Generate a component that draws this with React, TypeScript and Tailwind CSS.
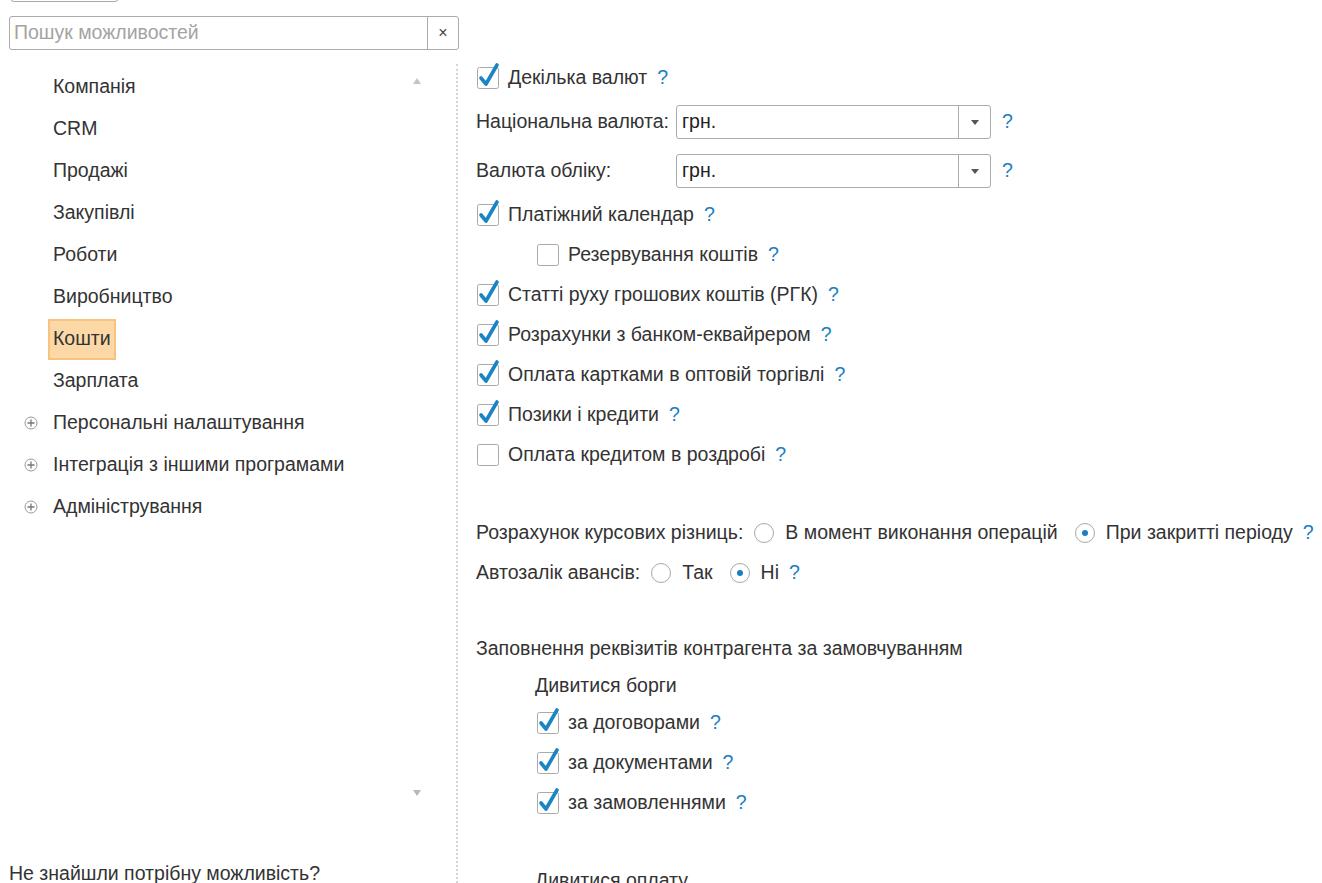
import React from "react";

const Q = () => (
  <span className="ml-[10px] text-[#1b7ec2]">?</span>
);

const Check = ({ on }: { on: boolean }) => (
  <svg width="24" height="24" viewBox="0 0 24 24" className="shrink-0 overflow-visible">
    <rect x="1.5" y="1.5" width="21" height="21" rx="2" fill="#fff" stroke="#a9a9a9" strokeWidth="1" />
    {on && (
      <path d="M5 12 L10 18 L21 -1" fill="none" stroke="#1b84c4" strokeWidth="3.6" strokeLinecap="round" strokeLinejoin="round" />
    )}
  </svg>
);

const Radio = ({ on }: { on: boolean }) => (
  <svg width="22" height="22" viewBox="0 0 22 22" className="shrink-0">
    <circle cx="11" cy="11" r="9.5" fill="#fff" stroke="#a9a9a9" strokeWidth="1" />
    {on && <circle cx="11" cy="11" r="3" fill="#1b7ec2" />}
  </svg>
);

const Plus = () => (
  <svg width="14" height="14" viewBox="0 0 14 14" className="absolute left-[24px] top-1/2 -translate-y-1/2">
    <circle cx="7" cy="7" r="6" fill="#fff" stroke="#9a9a9a" strokeWidth="1" />
    <path d="M7 3.5 V10.5 M3.5 7 H10.5" stroke="#777" strokeWidth="1.3" />
  </svg>
);

const CheckRow = ({ on, label, indent = 0, h = 40 }: { on: boolean; label: string; indent?: number; h?: number }) => (
  <div className="flex items-center shrink-0" style={{ height: h, paddingLeft: indent }}>
    <Check on={on} />
    <span className="ml-[8px]">{label}</span>
    <Q />
  </div>
);

const Select = ({ label }: { label: string }) => (
  <div className="flex items-center h-[34px]">
    <span className="w-[200px] shrink-0 whitespace-nowrap">{label}</span>
    <div className="w-[315px] h-[34px] border border-[#ababab] rounded-[3px] flex items-stretch bg-white">
      <div className="flex-1 flex items-center pl-[5px] text-[#222]">грн.</div>
      <div className="w-[32px] border-l border-[#ababab] flex items-center justify-center">
        <svg width="8" height="5" viewBox="0 0 8 5"><path d="M0 0 H8 L4 5 Z" fill="#555" /></svg>
      </div>
    </div>
    <span className="ml-[11px] text-[#1b7ec2]">?</span>
  </div>
);

const treeItems = ["Компанія", "CRM", "Продажі", "Закупівлі", "Роботи", "Виробництво", "Кошти", "Зарплата"];
const groupItems = ["Персональні налаштування", "Інтеграція з іншими програмами", "Адміністрування"];

export default function App() {
  return (
    <div
      className="w-[1322px] h-[883px] overflow-hidden bg-white text-[#333] text-[19.5px] relative flex flex-col"
      style={{ fontFamily: '"Liberation Sans", Arial, sans-serif' }}
    >
      {/* top cut button */}
      <div className="h-[16px] shrink-0 flex items-start pl-[10px]">
        <div className="w-[109px] h-[20px] -mt-[18px] border border-[#a9a9a9] rounded-[4px] bg-white" />
      </div>
      {/* search */}
      <div className="ml-[9px] w-[450px] h-[34px] shrink-0 border border-[#ababab] rounded-[3px] flex items-stretch">
        <div className="flex-1 flex items-center pl-[4px] text-[#a3a3a3]">Пошук можливостей</div>
        <div className="w-[31px] border-l border-[#ababab] flex items-center justify-center text-[#444] text-[16px]">×</div>
      </div>
      <div className="flex flex-1 min-h-0">
        {/* left */}
        <div className="w-[456px] shrink-0 flex flex-col relative">
          <div className="mt-[16px] flex flex-col shrink-0">
            {treeItems.map((t) => (
              <div key={t} className="h-[42px] shrink-0 flex items-center pl-[48px]">
                {t === "Кошти" ? (
                  <span className="h-[41px] flex items-center px-[3px] bg-[#fbd8a6] border-[2px] border-[#f6c47e]">{t}</span>
                ) : (
                  <span className="pl-[5px]">{t}</span>
                )}
              </div>
            ))}
            {groupItems.map((t) => (
              <div key={t} className="h-[42px] shrink-0 flex items-center pl-[53px] relative">
                <Plus />
                <span>{t}</span>
              </div>
            ))}
          </div>
          <div className="flex-1" />
          <div className="pl-[9px] h-[22px] leading-[22px] mb-[-1px] shrink-0">Не знайшли потрібну можливість?</div>
          {/* scroll arrows */}
          <svg width="8" height="6" viewBox="0 0 8 6" className="absolute left-[413px] top-[28px]"><path d="M4 0 L8 6 H0 Z" fill="#c4c4c4" /></svg>
          <svg width="8" height="6" viewBox="0 0 8 6" className="absolute left-[413px] top-[740px]"><path d="M0 0 H8 L4 6 Z" fill="#b8b8b8" /></svg>
        </div>
        {/* separator */}
        <div className="w-0 mt-[14px] border-l-2 border-dotted border-[#d6d6d6]" />
        {/* right */}
        <div className="flex flex-col pl-[18px]">
          <div className="mt-[8px] shrink-0" />
          <CheckRow on label="Декілька валют" indent={0} />
          <div className="mt-[7px] shrink-0"><Select label="Національна валюта:" /></div>
          <div className="mt-[15px] shrink-0"><Select label="Валюта обліку:" /></div>
          <div className="mt-[7px] shrink-0" />
          <CheckRow on label="Платіжний календар" />
          <CheckRow on={false} label="Резервування коштів" indent={60} />
          <CheckRow on label="Статті руху грошових коштів (РГК)" />
          <CheckRow on label="Розрахунки з банком-еквайрером" />
          <CheckRow on label="Оплата картками в оптовій торгівлі" />
          <CheckRow on label="Позики і кредити" />
          <CheckRow on={false} label="Оплата кредитом в роздробі" />
          <div className="mt-[38px] h-[40px] shrink-0 flex items-center whitespace-nowrap">
            <span>Розрахунок курсових різниць:</span>
            <span className="ml-[10px]"><Radio on={false} /></span>
            <span className="ml-[10px]">В момент виконання операцій</span>
            <span className="ml-[16px]"><Radio on /></span>
            <span className="ml-[10px]">При закритті періоду</span>
            <Q />
          </div>
          <div className="h-[40px] shrink-0 flex items-center">
            <span>Автозалік авансів:</span>
            <span className="ml-[10px]"><Radio on={false} /></span>
            <span className="ml-[10px]">Так</span>
            <span className="ml-[16px]"><Radio on /></span>
            <span className="ml-[10px]">Ні</span>
            <Q />
          </div>
          <div className="mt-[36px] h-[40px] shrink-0 flex items-center">Заповнення реквізитів контрагента за замовчуванням</div>
          <div className="h-[34px] shrink-0 flex items-center pl-[59px]">Дивитися борги</div>
          <CheckRow on label="за договорами" indent={60} />
          <CheckRow on label="за документами" indent={60} />
          <CheckRow on label="за замовленнями" indent={60} />
          <div className="mt-[38px] h-[40px] shrink-0 flex items-center pl-[59px]">Дивитися оплату</div>
        </div>
      </div>
    </div>
  );
}
